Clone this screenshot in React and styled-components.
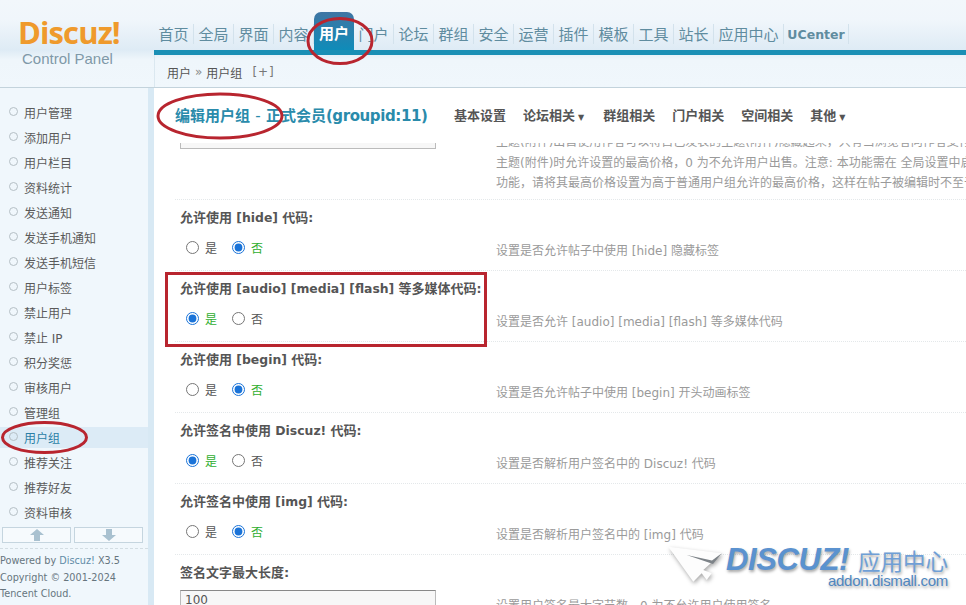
import React from "react";
import styled, { createGlobalStyle } from "styled-components";

const FONT = `"DejaVu Sans", "Noto Sans CJK SC", sans-serif`;

const Global = createGlobalStyle`
  html, body { margin: 0; padding: 0; height: 100%; overflow: hidden; background: #fff; }
  #root { height: 100%; }
`;

const Page = styled.div`
  position: relative;
  width: 966px;
  height: 605px;
  overflow: hidden;
  font-family: ${FONT};
  font-size: 12px;
  color: #555;
  display: flex;
  flex-direction: column;
`;

const Header = styled.header`
  display: flex;
  height: 88px;
  flex: none;
  border-bottom: 1px solid #c3d3dc;
  box-sizing: border-box;
  background: linear-gradient(#f2f7fb 0, #f0f6fb 20px, #deebf5 50px, #eff6fb 60px, #f0f7fc 87px);
`;

const LogoBox = styled.div`
  width: 154px;
  flex: none;
  padding: 13px 0 0 18px;
  box-sizing: border-box;
`;

const LogoWord = styled.div`
  font-family: "Open Sans", sans-serif;
  font-weight: 700;
  font-size: 31px;
  line-height: 38px;
  letter-spacing: -0.9px;
  color: #ef9a2c;
`;

const LogoSub = styled.div`
  font-family: "Liberation Sans", sans-serif;
  font-size: 15px;
  line-height: 16px;
  color: #7f99a8;
  padding-left: 4px;
`;

const HeaderRight = styled.div`
  flex: 1;
  display: flex;
  flex-direction: column;
`;

const Nav = styled.nav`
  height: 50px;
  flex: none;
  display: flex;
  align-items: flex-end;
`;

const NavItem = styled.div`
  height: ${(p) => (p.$active ? "38px" : "20px")};
  margin-bottom: ${(p) => (p.$active ? "0" : "6px")};
  width: ${(p) => p.$w || 40}px;
  box-sizing: border-box;
  text-align: center;
  font-size: ${(p) => (p.$small ? "12.5px" : "15px")};
  font-weight: ${(p) => (p.$active || p.$small ? 700 : 400)};
  line-height: ${(p) => (p.$active ? "45px" : "22px")};
  color: ${(p) => (p.$active ? "#fff" : "#5f8c9f")};
  border-right: ${(p) => (p.$active ? "0" : "1px solid #d3e2ec")};
  border-radius: ${(p) => (p.$active ? "7px 7px 0 0" : "0")};
  background: ${(p) => (p.$active ? "linear-gradient(#3f75a3 0, #0f8cb9 100%)" : "none")};
  white-space: nowrap;
`;

const BlueBar = styled.div`
  height: 5px;
  flex: none;
  background: #1a8fb5;
`;

const Crumb = styled.div`
  flex: 1;
  padding: 2px 0 0 12px;
  display: flex;
  align-items: center;
  color: #555;
  font-size: 12px;
  gap: 4px;
  border-left: 1px solid #dbe8f0;
`;

const CrumbSep = styled.span`
  color: #8a8a8a;
`;

const CrumbAdd = styled.span`
  margin-left: 6px;
  letter-spacing: 1px;
  color: #777;
`;

const Body = styled.div`
  flex: 1;
  display: flex;
  min-height: 0;
`;

const Side = styled.aside`
  width: 154px;
  flex: none;
  box-sizing: border-box;
  background: #f0f7fc;
  border-right: 6px solid #d8e9f4;
  padding-top: 12px;
  display: flex;
  flex-direction: column;
  overflow: hidden;
`;

const SideList = styled.ul`
  margin: 0;
  padding: 0;
  list-style: none;
`;

const SideItem = styled.li`
  height: 25px;
  display: flex;
  align-items: center;
  padding-left: 9px;
  gap: 6px;
  color: ${(p) => (p.$active ? "#2b7fa6" : "#5a5a5a")};
  font-size: 12px;
  background: ${(p) =>
    p.$active ? "linear-gradient(transparent 2px, #dcebf6 2px, #dcebf6 23px, transparent 23px)" : "none"};
`;

const Bullet = styled.i`
  width: 7px;
  height: 7px;
  border: 1px solid #b5bfc5;
  border-radius: 50%;
  flex: none;
  margin-top: -2px;
`;

const Scrollers = styled.div`
  display: flex;
  gap: 3px;
  padding: 2px 0 0 2px;
`;

const ScrollBtn = styled.div`
  width: 69px;
  height: 16px;
  box-sizing: border-box;
  border: 1px solid #c5d5df;
  background: #f6fafd;
  display: flex;
  align-items: center;
  justify-content: center;
`;

const SideFoot = styled.div`
  margin-top: 5px;
  border-top: 1px dashed #d3dde3;
  padding-top: 4px;
  font-size: 9.7px;
  line-height: 16.5px;
  color: #66757e;
  white-space: nowrap;
`;

const FootLink = styled.span`
  color: #5f8ba6;
`;

const Main = styled.main`
  flex: 1;
  min-width: 0;
  display: flex;
  flex-direction: column;
  background: #fff;
`;

const TitleBar = styled.div`
  height: 55px;
  flex: none;
  display: flex;
  align-items: center;
  padding: 0 0 2px 21px;
  box-sizing: border-box;
  background: #fff;
`;

const Title = styled.h1`
  margin: 0;
  width: 279px;
  flex: none;
  font-size: 15px;
  font-weight: 700;
  color: #2a8bab;
  white-space: nowrap;
`;

const TitleDash = styled.span`
  font-weight: 400;
`;

const TitleCode = styled.span`
  letter-spacing: -0.4px;
`;

const Tabs = styled.div`
  display: flex;
  gap: 17px;
  font-weight: 700;
  color: #555;
  font-size: 13px;
`;

const Tab = styled.span`
  white-space: nowrap;
`;

const Caret = styled.span`
  font-size: 8px;
  margin: 0 2px 0 3px;
`;

const Scroll = styled.div`
  flex: 1;
  min-height: 0;
  overflow: hidden;
  padding-left: 21px;
`;

const Row = styled.section`
  display: grid;
  grid-template-columns: 316px 1fr;
  height: ${(p) => p.$h || 71}px;
  border-bottom: 1px dotted #e4e8ea;
  box-sizing: border-box;
  padding-left: 5px;
`;

const Left = styled.div`
  padding-top: 9px;
`;

const Label = styled.div`
  font-weight: 700;
  color: #555;
  font-size: 13px;
  line-height: 18px;
  white-space: nowrap;
`;

const Latin = styled.span`
  font-size: 12.4px;
`;

const Radios = styled.div`
  display: flex;
  align-items: center;
  margin-top: 12px;
  padding-left: 6px;
  height: 16px;
`;

const Opt = styled.label`
  display: flex;
  align-items: center;
  gap: 6px;
  width: 46px;
  color: ${(p) => (p.$on ? "#2fae2f" : "#555")};
`;

const Radio = styled.input`
  margin: 0;
  width: 13px;
  height: 13px;
  accent-color: #1a73d8;
`;

const Desc = styled.div`
  color: #9a9a9a;
  font-size: 12px;
  padding-top: 43px;
  line-height: 16px;
  white-space: nowrap;
  overflow: hidden;
`;

const LongDesc = styled.div`
  color: #9a9a9a;
  font-size: 12px;
  line-height: 20.5px;
  margin-top: -11px;
  white-space: nowrap;
`;

const DescCell = styled.div`
  overflow: hidden;
`;

const TextInput = styled.div`
  width: 256px;
  height: 30px;
  box-sizing: border-box;
  border: 1px solid #bbb;
  border-top-color: #888;
  background: #f7f7f7;
  padding: 2px 4px;
  color: #555;
  font-size: 12px;
`;

const InputTop = styled(TextInput)`
  margin-top: -24px;
`;

const InputBottom = styled(TextInput)`
  margin-top: 8px;
`;

const Annot = styled.svg`
  position: absolute;
  left: 0;
  top: 0;
  pointer-events: none;
`;

const RedBox = styled.div`
  position: absolute;
  left: 165px;
  top: 272px;
  width: 322px;
  height: 75px;
  box-sizing: border-box;
  border: 3px solid #b8252f;
`;

const Mark = styled.div`
  position: absolute;
  left: 666px;
  top: 544px;
  width: 290px;
  height: 52px;
  font-family: "Liberation Sans", "Noto Sans CJK SC", sans-serif;
  text-shadow: 1px 2px 3px rgba(0, 0, 0, 0.35);
`;

const MarkPlane = styled.svg`
  position: absolute;
  left: 0;
  top: 0;
  filter: drop-shadow(1px 2px 2px rgba(0, 0, 0, 0.35));
`;

const MarkLogo = styled.div`
  position: absolute;
  left: 60px;
  top: -2px;
  font-weight: 700;
  font-style: italic;
  font-size: 31px;
  letter-spacing: -0.4px;
  color: #5b92cf;
  white-space: nowrap;
`;

const MarkCn = styled.span`
  font-style: normal;
  font-weight: 400;
  font-size: 22.5px;
  letter-spacing: 0;
  margin-left: 9px;
  color: #6f9fd6;
`;

const MarkUrl = styled.div`
  position: absolute;
  left: 162px;
  top: 28px;
  font-size: 15px;
  letter-spacing: -0.3px;
  color: #4f86c0;
  white-space: nowrap;
`;

const MENU = ["用户管理","添加用户","用户栏目","资料统计","发送通知","发送手机通知","发送手机短信","用户标签","禁止用户","禁止 IP","积分奖惩","审核用户","管理组","用户组","推荐关注","推荐好友","资料审核"];
const NAV = ["首页","全局","界面","内容","用户","门户","论坛","群组","安全","运营","插件","模板","工具","站长"];
const ROWS = [
  { label: "允许使用 [hide] 代码:", yes: false, desc: "设置是否允许帖子中使用 [hide] 隐藏标签" },
  { label: "允许使用 [audio] [media] [flash] 等多媒体代码:", yes: true, desc: "设置是否允许 [audio] [media] [flash] 等多媒体代码" },
  { label: "允许使用 [begin] 代码:", yes: false, desc: "设置是否允许帖子中使用 [begin] 开头动画标签" },
  { label: "允许签名中使用 Discuz! 代码:", yes: true, desc: "设置是否解析用户签名中的 Discuz! 代码" },
  { label: "允许签名中使用 [img] 代码:", yes: false, desc: "设置是否解析用户签名中的 [img] 代码" },
];

const mixed = (text) =>
  text.split(/([\x20-\x7e]+)/).map((part, i) =>
    /^[\x20-\x7e]+$/.test(part) ? <Latin key={i}>{part}</Latin> : part
  );

const Arrow = ({ up, color }) => (
  <svg width="16" height="12" viewBox="0 0 16 12">
    <path
      d={up ? "M8 0 L15 6 L11 6 L11 12 L5 12 L5 6 L1 6 Z" : "M8 12 L15 6 L11 6 L11 0 L5 0 L5 6 L1 6 Z"}
      fill={color}
    />
  </svg>
);

const RadioPair = ({ yes, name }) => (
  <Radios>
    <Opt $on={yes}>
      <Radio type="radio" name={name} defaultChecked={yes} />是
    </Opt>
    <Opt $on={!yes}>
      <Radio type="radio" name={name} defaultChecked={!yes} />否
    </Opt>
  </Radios>
);

export default function App() {
  return (
    <Page>
      <Global />
      <Header>
        <LogoBox>
          <LogoWord>Discuz!</LogoWord>
          <LogoSub>Control Panel</LogoSub>
        </LogoBox>
        <HeaderRight>
          <Nav>
            {NAV.map((n) => (
              <NavItem key={n} $active={n === "用户"}>{n}</NavItem>
            ))}
            <NavItem $w={70}>应用中心</NavItem>
            <NavItem $w={65} $small>UCenter</NavItem>
          </Nav>
          <BlueBar />
          <Crumb>
            用户 <CrumbSep>»</CrumbSep> 用户组 <CrumbAdd>[+]</CrumbAdd>
          </Crumb>
        </HeaderRight>
      </Header>
      <Body>
        <Side>
          <SideList>
            {MENU.map((m) => (
              <SideItem key={m} $active={m === "用户组"}>
                <Bullet />
                {m}
              </SideItem>
            ))}
          </SideList>
          <Scrollers>
            <ScrollBtn><Arrow up color="#a9c1d0" /></ScrollBtn>
            <ScrollBtn><Arrow color="#a9c1d0" /></ScrollBtn>
          </Scrollers>
          <SideFoot>
            Powered by <FootLink>Discuz!</FootLink> X3.5
            <br />
            Copyright © 2001-2024
            <br />
            Tencent Cloud.
          </SideFoot>
        </Side>
        <Main>
          <TitleBar>
            <Title>
              编辑用户组 <TitleDash>-</TitleDash> 正式会员<TitleCode>(groupid:11)</TitleCode>
            </Title>
            <Tabs>
              <Tab>基本设置</Tab>
              <Tab>论坛相关<Caret>▼</Caret></Tab>
              <Tab>群组相关</Tab>
              <Tab>门户相关</Tab>
              <Tab>空间相关</Tab>
              <Tab>其他<Caret>▼</Caret></Tab>
            </Tabs>
          </TitleBar>
          <Scroll>
            <Row $h={57}>
              <div><InputTop>1</InputTop></div>
              <DescCell>
                <LongDesc>
                  主题(附件)出售使用作者可以将自己发表的主题(附件)隐藏起来，只有当浏览者向作者支付
                  <br />
                  主题(附件)时允许设置的最高价格，0 为不允许用户出售。注意: 本功能需在 全局设置中启用积分交易
                  <br />
                  功能，请将其最高价格设置为高于普通用户组允许的最高价格，这样在帖子被编辑时不至于
                </LongDesc>
              </DescCell>
            </Row>
            {ROWS.map((r, i) => (
              <Row key={r.label}>
                <Left>
                  <Label>{mixed(r.label)}</Label>
                  <RadioPair yes={r.yes} name={`r${i}`} />
                </Left>
                <Desc>{r.desc}</Desc>
              </Row>
            ))}
            <Row>
              <Left>
                <Label>签名文字最大长度:</Label>
                <InputBottom>100</InputBottom>
              </Left>
              <Desc>设置用户签名最大字节数，0 为不允许用户使用签名</Desc>
            </Row>
          </Scroll>
        </Main>
      </Body>

      <RedBox />
      <Annot width="966" height="605" viewBox="0 0 966 605" fill="none" stroke="#b8252f" strokeWidth="3">
        <ellipse cx="340" cy="41" rx="32" ry="22.5" />
        <ellipse cx="220" cy="116" rx="62" ry="22" />
        <ellipse cx="44.5" cy="437.5" rx="42" ry="15" />
      </Annot>
      <Mark>
        <MarkPlane width="62" height="44" viewBox="0 0 62 44">
          <path d="M2.3 2.7 L55.7 9.3 L37.3 26 L45.7 29.3 L40.7 36 L35.7 29.3 L27.3 37.7 Z" fill="#fdfdfd" />
          <path d="M20.7 11 L47 20 L55.7 9.3 L46 16.5 Z" fill="#7d8388" />
        </MarkPlane>
        <MarkLogo>
          DISCUZ!<MarkCn>应用中心</MarkCn>
        </MarkLogo>
        <MarkUrl>addon.dismall.com</MarkUrl>
      </Mark>
    </Page>
  );
}
